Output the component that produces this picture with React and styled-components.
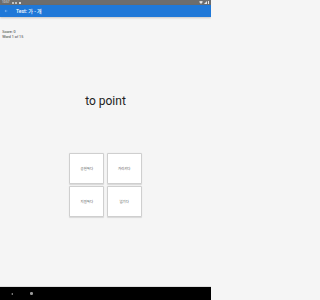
import styled, { createGlobalStyle } from "styled-components";

const GlobalStyle = createGlobalStyle`
  html, body {
    margin: 0;
    padding: 0;
    background: #f5f5f5;
  }
  body {
    font-family: Roboto, "Noto Sans CJK KR", sans-serif;
  }
`;

const CHOICES = ["공헌하다", "가리키다", "지원하다", "넘기다"];

function App() {
  return (
    <>
      <GlobalStyle />
      <Screen>
        <StatusBar>
          <StatusLeft>
            <Clock>10:57</Clock>
            <Dot />
            <Dot />
            <Dot $square />
          </StatusLeft>
          <StatusRight>
            <svg width="4" height="3" viewBox="0 0 8 6">
              <path d="M0 1.5 Q4 -1.5 8 1.5 L4 6 Z" fill="#e6e6e6" />
            </svg>
            <svg width="3" height="3" viewBox="0 0 6 6">
              <path d="M0 6 L6 0 L6 6 Z" fill="#e6e6e6" />
            </svg>
            <Battery />
          </StatusRight>
        </StatusBar>
        <AppBar>
          <svg width="4" height="4" viewBox="0 0 24 24">
            <path
              d="M20 11H7.83l5.59-5.59L12 4l-8 8 8 8 1.41-1.41L7.83 13H20v-2z"
              fill="#9cc8f5"
            />
          </svg>
          <Title>Test: 가 - 개</Title>
        </AppBar>
        <Content>
          <Info>
            <InfoLine>Score: 0</InfoLine>
            <InfoLine>Word 1 of 15</InfoLine>
          </Info>
          <Word>to point</Word>
          <ChoiceGrid>
            {CHOICES.map((c) => (
              <Choice key={c}>{c}</Choice>
            ))}
          </ChoiceGrid>
        </Content>
        <NavBar>
          <NavBack />
          <NavHome />
        </NavBar>
      </Screen>
    </>
  );
}

export default App;

const Screen = styled.div`
  height: 300px;
  width: 211px;
  display: flex;
  flex-direction: column;
  background: #f5f5f5;
  overflow: hidden;
`;

const StatusBar = styled.div`
  height: 5px;
  background: #6d6d6d;
  display: flex;
  align-items: center;
  justify-content: space-between;
  padding: 0 2px;
`;

const StatusLeft = styled.div`
  display: flex;
  align-items: center;
  gap: 1.5px;
`;

const Clock = styled.span`
  font-size: 3px;
  line-height: 5px;
  color: #e6e6e6;
  margin-right: 1px;
`;

const Dot = styled.span`
  width: 2px;
  height: 2px;
  border-radius: ${(p) => (p.$square ? "0.3px" : "50%")};
  background: #dcdcdc;
`;

const StatusRight = styled.div`
  display: flex;
  align-items: center;
  gap: 1px;
`;

const Battery = styled.span`
  width: 1.5px;
  height: 3px;
  background: #e6e6e6;
`;

const AppBar = styled.div`
  height: 12px;
  background: #1f78d8;
  display: flex;
  align-items: center;
  gap: 8px;
  padding-left: 4px;
  box-shadow: 0 1px 2px rgba(0, 0, 0, 0.2);
  position: relative;
  z-index: 1;
`;

const Title = styled.span`
  color: #ffffff;
  font-size: 5px;
  font-weight: 500;
  line-height: 12px;
`;

const Content = styled.div`
  flex: 1;
  display: flex;
  flex-direction: column;
  padding-top: 13px;
`;

const Info = styled.div`
  padding-left: 2.3px;
`;

const InfoLine = styled.div`
  font-size: 3.7px;
  line-height: 5px;
  color: #333333;
`;

const Word = styled.div`
  margin-top: 54px;
  text-align: center;
  font-size: 12px;
  line-height: 14px;
  color: #222222;
`;

const ChoiceGrid = styled.div`
  margin-top: 45px;
  align-self: center;
  display: grid;
  grid-template-columns: repeat(2, 35px);
  grid-auto-rows: 31px;
  gap: 2.4px;
`;

const Choice = styled.div`
  background: #ffffff;
  border: 0.5px solid #cfcfcf;
  border-radius: 1px;
  box-shadow: 0 0.5px 1px rgba(0, 0, 0, 0.12);
  display: flex;
  align-items: center;
  justify-content: center;
  font-size: 3.4px;
  color: #555555;
`;

const NavBar = styled.div`
  height: 13px;
  background: #000000;
  border-top: 1px solid #dedede;
  display: flex;
  align-items: center;
  gap: 17px;
  padding-left: 11px;
`;

const NavBack = styled.span`
  width: 0;
  height: 0;
  border-top: 1.5px solid transparent;
  border-bottom: 1.5px solid transparent;
  border-right: 2.5px solid #9a9a9a;
`;

const NavHome = styled.span`
  width: 2.6px;
  height: 2.6px;
  border-radius: 50%;
  background: #9a9a9a;
`;
